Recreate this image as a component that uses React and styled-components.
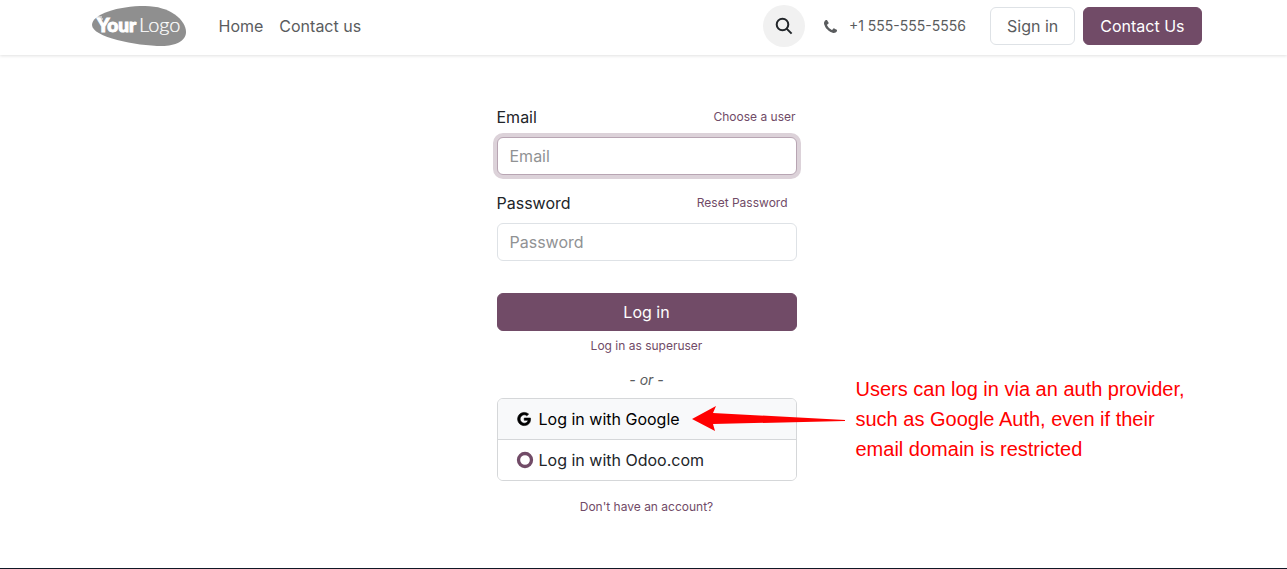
import React, { useState } from "react";
import styled, { createGlobalStyle } from "styled-components";

const App = () => {
	const [email, setEmail] = useState("");
	const [password, setPassword] = useState("");

	return (
		<>
			<GlobalStyle />
			<Header>
				<Container>
					<Brand href="#" aria-label="YourLogo">
						<Logo />
					</Brand>
					<Nav>
						<a href="#">Home</a>
						<a href="#">Contact us</a>
					</Nav>
					<Search type="button" aria-label="Search">
						<SearchIcon />
					</Search>
					<Phone href="#">
						<PhoneIcon />
						<span>+1 555-555-5556</span>
					</Phone>
					<Actions>
						<Button type="button">Sign in</Button>
						<Button type="button" $primary>
							Contact Us
						</Button>
					</Actions>
				</Container>
			</Header>
			<Main>
				<Form onSubmit={(e) => e.preventDefault()}>
					<Field>
						<LabelRow>
							<label htmlFor="email">Email</label>
							<SmallLink href="#">Choose a user</SmallLink>
						</LabelRow>
						<Input
							id="email"
							type="text"
							placeholder="Email"
							value={email}
							onChange={(e) => setEmail(e.target.value)}
							$active
						/>
					</Field>
					<Field>
						<LabelRow>
							<label htmlFor="password">Password</label>
							<SmallLink href="#" $inset>
								Reset Password
							</SmallLink>
						</LabelRow>
						<Input
							id="password"
							type="password"
							placeholder="Password"
							value={password}
							onChange={(e) => setPassword(e.target.value)}
						/>
					</Field>
					<Submit type="submit" $primary>
						Log in
					</Submit>
					<SmallLink href="#">Log in as superuser</SmallLink>
					<Or>- or -</Or>
					<Providers>
						<Provider href="#" $hovered>
							<GoogleIcon />
							Log in with Google
						</Provider>
						<Provider href="#">
							<OdooIcon />
							Log in with Odoo.com
						</Provider>
						<Callout>
							<Arrow />
							<p>
								Users can log in via an auth provider,
								<br />
								such as Google Auth, even if their
								<br />
								email domain is restricted
							</p>
						</Callout>
					</Providers>
					<SmallLink href="#">Don't have an account?</SmallLink>
				</Form>
			</Main>
			<Footer />
		</>
	);
};

export default App;

const Logo = () => (
	<svg width="95" height="42" viewBox="0 0 95 42">
		<path
			d="M0 20C0 9 26 1 53 1C78 1 94 15 94 27C94 36 83 41 70 41C44 41 0 32 0 20Z"
			fill="#8f8f8f"
		/>
		<path d="M4 12h6M6 14h5" stroke="#fff" strokeWidth="1" />
		<text
			x="5"
			y="27"
			fill="#fff"
			stroke="#fff"
			strokeWidth="1"
			fontFamily="Lato, sans-serif"
			fontWeight="900"
			fontSize="19"
		>
			Your
		</text>
		<text
			x="47"
			y="27"
			fill="#fff"
			stroke="#fff"
			strokeWidth="0.2"
			fontFamily="Lato, sans-serif"
			fontWeight="300"
			fontSize="20"
		>
			Logo
		</text>
	</svg>
);

const SearchIcon = () => (
	<svg width="18" height="18" viewBox="0 0 18 18" fill="none" stroke="#212529" strokeWidth="2">
		<circle cx="7.5" cy="7.5" r="5.8" />
		<path d="M11.6 11.6L16.6 16.6" />
	</svg>
);

const PhoneIcon = () => (
	<svg width="13" height="13" viewBox="0 0 1408 1408" fill="currentColor">
		<path d="M1408 1112q0 27-10 70.5t-21 68.5q-21 50-122 106-94 51-186 51-27 0-53-3.5t-57.5-12.5-47-14.5-55.5-20.5-49-18q-98-35-175-83-127-79-264-216t-216-264q-48-77-83-175-3-9-18-49t-20.5-55.5-14.5-47-12.5-57.5-3.5-53q0-92 51-186 56-101 106-122 25-11 68.500-21t70.500-10q14 0 21 3 18 6 53 76 11 19 30 54t35 63.500 31 53.500q3 4 17.500 25t21.500 35.500 7 28.500q0 20-28.500 50t-62 55-62 53-28.500 46q0 9 5 22.500t8.500 20.500 14 24 11.500 19q76 137 174 235t235 174q2 1 19 11.500t24 14 20.500 8.500 22.500 5q18 0 46-28.500t53-62 55-62 50-28.500q14 0 28.500 7t35.500 21.500 25 17.500q25 15 53.500 31t63.500 35 54 30q70 35 76 53 3 7 3 21z" />
	</svg>
);

const GoogleIcon = () => (
	<svg
		width="18"
		height="18"
		viewBox="-60 -150 2092 2092"
		fill="#000"
		stroke="#000"
		strokeWidth="70"
	>
		<path d="M896 786h725q12 67 12 128 0 217-91 387.500t-259.500 266.500-386.500 96q-157 0-299-60.500t-245-163.500-163.500-245-60.500-299 60.500-299 163.500-245 245-163.500 299-60.500q300 0 515 201l-209 201q-123-119-306-119-129 0-238.500 65t-173.500 176.500-64 243.500 64 243.500 173.500 176.500 238.500 65q87 0 160-24t120-60 82-82 51.500-87 22.500-78h-436v-264z" />
	</svg>
);

const OdooIcon = () => (
	<svg width="18" height="18" viewBox="0 0 18 18" fill="none">
		<circle cx="9" cy="9" r="6.5" stroke="#714b67" strokeWidth="3.3" />
	</svg>
);

const Arrow = () => (
	<svg width="154" height="26" viewBox="0 0 154 26">
		<path d="M0 13L24 0L21 7L153 14V15L21 18L23 25Z" fill="#f00" />
	</svg>
);

const GlobalStyle = createGlobalStyle`
	* {
		box-sizing: border-box;
	}

	body {
		margin: 0;
		background: #fff;
		color: #212529;
		font-family: Inter, "Liberation Sans", sans-serif;
		font-size: 16px;
		line-height: 24px;
	}

	a {
		text-decoration: none;
	}

	p {
		margin: 0;
	}

	svg {
		display: block;
		flex-shrink: 0;
	}
`;

const Header = styled.header`
	padding: 5px 0 8px 6px;
	box-shadow: 0 1px 3px rgba(0, 0, 0, 0.12);
`;

const Container = styled.div`
	display: flex;
	align-items: center;
	max-width: 1110px;
	margin: 0 auto;
`;

const Brand = styled.a`
	margin-right: 32px;
`;

const Nav = styled.nav`
	display: flex;
	gap: 16px;
	margin-right: auto;

	a {
		color: #5a5c5e;
	}
`;

const Search = styled.button`
	display: flex;
	align-items: center;
	justify-content: center;
	width: 42px;
	height: 42px;
	padding: 0;
	border: none;
	border-radius: 50%;
	background: #f1f1f1;
	cursor: pointer;
`;

const Phone = styled.a`
	display: flex;
	align-items: center;
	gap: 12px;
	margin: 0 24px 0 19px;
	color: #5a5c5e;
	font-size: 14px;
`;

const Actions = styled.div`
	display: flex;
	gap: 8px;
`;

const Button = styled.button`
	height: 38px;
	padding: 0 16px;
	border: 1px solid ${(props) => (props.$primary ? "#714b67" : "#dee2e6")};
	border-radius: 6px;
	background: ${(props) => (props.$primary ? "#714b67" : "#fff")};
	color: ${(props) => (props.$primary ? "#fff" : "#5a5c5e")};
	font: inherit;
	cursor: pointer;
`;

const Main = styled.main`
	padding: 50px 0 49px 6px;
`;

const Form = styled.form`
	display: flex;
	flex-direction: column;
	align-items: center;
	width: 300px;
	margin: 0 auto;
`;

const Field = styled.div`
	width: 100%;
	margin-bottom: 16px;
`;

const LabelRow = styled.div`
	display: flex;
	justify-content: space-between;
	margin-bottom: 8px;
`;

const SmallLink = styled.a`
	padding: 0 ${(props) => (props.$inset ? "9px" : "1px")};
	color: #714b67;
	font-size: 12px;
`;

const Input = styled.input`
	display: block;
	width: 100%;
	height: 38px;
	padding: 0 12px;
	border: 1px solid ${(props) => (props.$active ? "#b8a5b3" : "#dee2e6")};
	border-radius: 6px;
	outline: none;
	box-shadow: ${(props) => (props.$active ? "0 0 0 4px #dcd2d9" : "none")};
	background: #fff;
	color: #212529;
	font: inherit;

	&::placeholder {
		color: #909294;
		opacity: 1;
	}
`;

const Submit = styled(Button)`
	width: 100%;
	margin: 16px 0 3px;
`;

const Or = styled.p`
	margin: 10px 0 6px;
	color: #5a5c5e;
	font-size: 14px;
	font-style: italic;
`;

const Providers = styled.div`
	position: relative;
	width: 100%;
	margin-bottom: 14px;
	border: 1px solid #d5d7d9;
	border-radius: 6px;
`;

const Provider = styled.a`
	display: flex;
	align-items: center;
	gap: 5px;
	padding: 8px 18px;
	border-radius: ${(props) => (props.$hovered ? "5px 5px 0 0" : "0 0 5px 5px")};
	background: ${(props) => (props.$hovered ? "#f8f9fa" : "#fff")};
	color: ${(props) => (props.$hovered ? "#000" : "#212529")};

	& + & {
		border-top: 1px solid #d5d7d9;
	}
`;

/* sits over the provider list and points at the Google row */
const Callout = styled.div`
	position: absolute;
	top: -25px;
	left: 194px;
	display: flex;
	align-items: center;
	gap: 10px;
	color: #f00;
	font-family: "Liberation Sans", Arial, sans-serif;
	font-size: 20px;
	line-height: 30px;
	white-space: nowrap;
	pointer-events: none;
`;

const Footer = styled.footer`
	height: 1px;
	background: #111827;
`;
